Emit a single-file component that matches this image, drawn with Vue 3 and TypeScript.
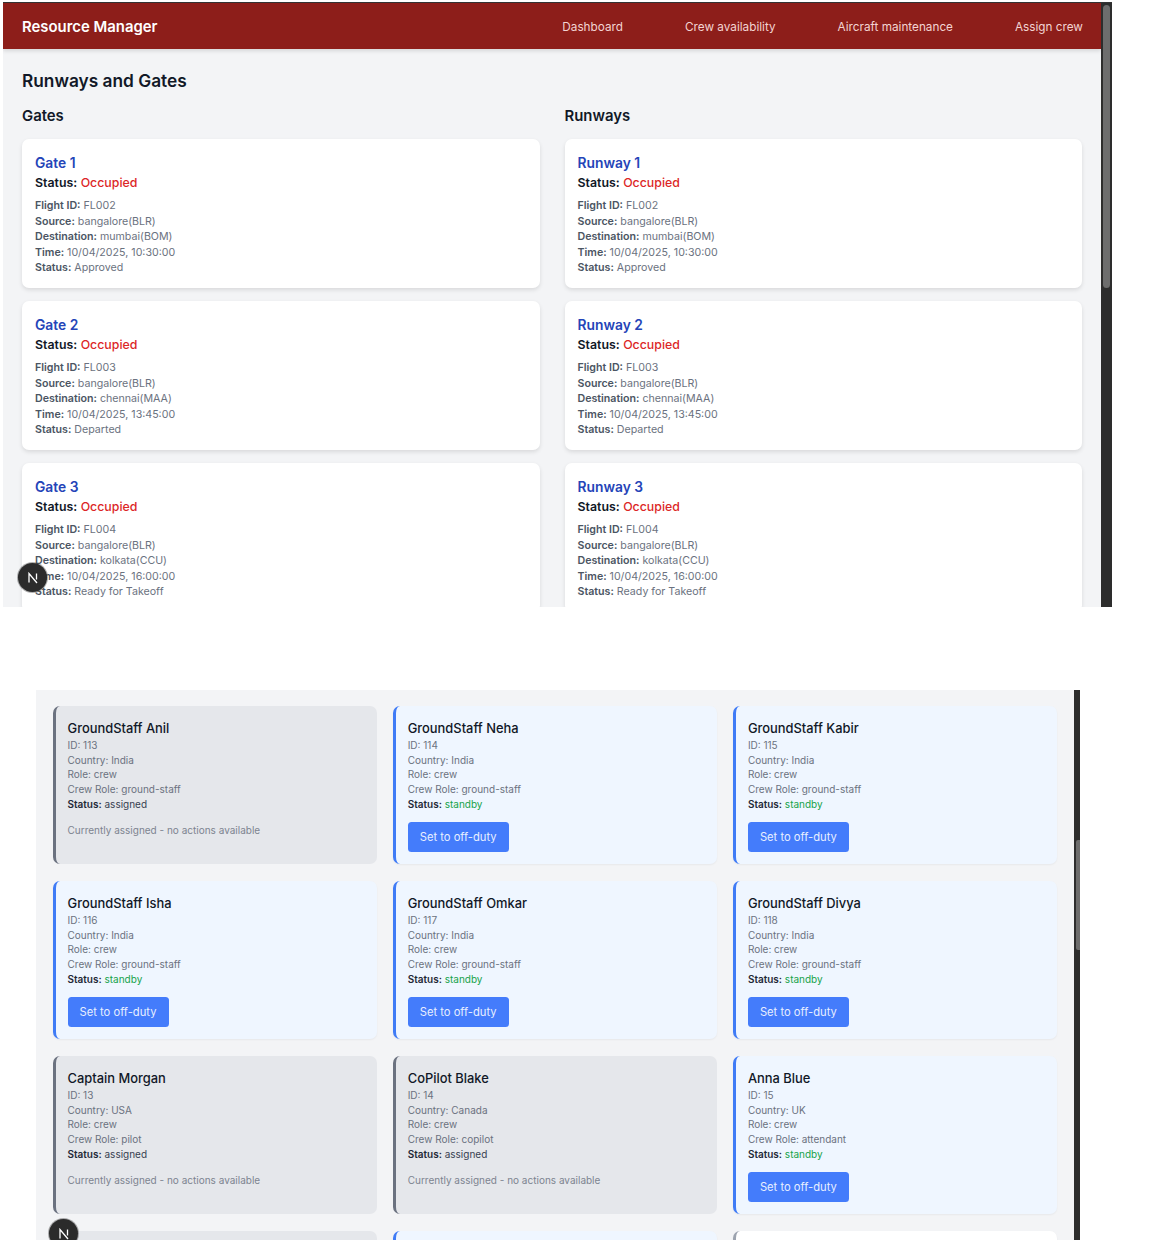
<script setup lang="ts">
interface Flight { id: string; dest: string; time: string; status: string }
const flights: Flight[] = [
  { id: 'FL002', dest: 'mumbai(BOM)', time: '10/04/2025, 10:30:00', status: 'Approved' },
  { id: 'FL003', dest: 'chennai(MAA)', time: '10/04/2025, 13:45:00', status: 'Departed' },
  { id: 'FL004', dest: 'kolkata(CCU)', time: '10/04/2025, 16:00:00', status: 'Ready for Takeoff' },
]
const columns = [
  { title: 'Gates', item: 'Gate' },
  { title: 'Runways', item: 'Runway' },
]
const nav = ['Dashboard', 'Crew availability', 'Aircraft maintenance', 'Assign crew']

interface Crew { name: string; id: number; country: string; crewRole: string; status: string }
const crew: Crew[] = [
  { name: 'GroundStaff Anil', id: 113, country: 'India', crewRole: 'ground-staff', status: 'assigned' },
  { name: 'GroundStaff Neha', id: 114, country: 'India', crewRole: 'ground-staff', status: 'standby' },
  { name: 'GroundStaff Kabir', id: 115, country: 'India', crewRole: 'ground-staff', status: 'standby' },
  { name: 'GroundStaff Isha', id: 116, country: 'India', crewRole: 'ground-staff', status: 'standby' },
  { name: 'GroundStaff Omkar', id: 117, country: 'India', crewRole: 'ground-staff', status: 'standby' },
  { name: 'GroundStaff Divya', id: 118, country: 'India', crewRole: 'ground-staff', status: 'standby' },
  { name: 'Captain Morgan', id: 13, country: 'USA', crewRole: 'pilot', status: 'assigned' },
  { name: 'CoPilot Blake', id: 14, country: 'Canada', crewRole: 'copilot', status: 'assigned' },
  { name: 'Anna Blue', id: 15, country: 'UK', crewRole: 'attendant', status: 'standby' },
]
</script>

<template>
  <div class="page">
    <section class="shot shot-top">
      <div class="app">
        <header class="bar">
          <span class="brand">Resource Manager</span>
          <nav class="nav">
            <a v-for="n in nav" :key="n">{{ n }}</a>
          </nav>
        </header>
        <main class="main">
          <h1>Runways and Gates</h1>
          <div class="cols">
            <div v-for="c in columns" :key="c.title" class="col">
              <h2>{{ c.title }}</h2>
              <article v-for="(f, i) in flights" :key="f.id" class="res">
                <h3>{{ c.item }} {{ i + 1 }}</h3>
                <p class="occ"><b>Status:</b> <span>Occupied</span></p>
                <div class="lines">
                  <p><b>Flight ID:</b> {{ f.id }}</p>
                  <p><b>Source:</b> bangalore(BLR)</p>
                  <p><b>Destination:</b> {{ f.dest }}</p>
                  <p><b>Time:</b> {{ f.time }}</p>
                  <p><b>Status:</b> {{ f.status }}</p>
                </div>
              </article>
            </div>
          </div>
        </main>
        <div class="badge badge-top">
          <svg width="12" height="12" viewBox="0 0 12 12" fill="none" stroke="#fff" stroke-width="1.3"><path d="M2 10.5V1.5L10 11" /><path d="M9.5 1.5V7.5" /></svg>
        </div>
      </div>
      <div class="track track-top"><div class="thumb thumb-top"></div></div>
    </section>

    <section class="shot shot-bottom">
      <div class="app app-b">
        <div class="grid">
          <article v-for="p in crew" :key="p.id" class="person" :class="p.status">
            <h3>{{ p.name }}</h3>
            <p>ID: {{ p.id }}</p>
            <p>Country: {{ p.country }}</p>
            <p>Role: crew</p>
            <p>Crew Role: {{ p.crewRole }}</p>
            <p class="st"><b>Status:</b> <span>{{ p.status }}</span></p>
            <button v-if="p.status === 'standby'" type="button">Set to off-duty</button>
            <p v-else class="none">Currently assigned - no actions available</p>
          </article>
          <article class="person assigned stub"></article>
          <article class="person standby stub"></article>
          <article class="person blank stub"></article>
        </div>
        <div class="badge badge-bottom">
          <svg width="12" height="12" viewBox="0 0 12 12" fill="none" stroke="#fff" stroke-width="1.3"><path d="M2 10.5V1.5L10 11" /><path d="M9.5 1.5V7.5" /></svg>
        </div>
      </div>
      <div class="track track-bottom"><div class="thumb thumb-bottom"></div></div>
    </section>
  </div>
</template>

<style>
html, body { margin: 0; background: #fff; }
</style>

<style scoped>
.page {
  width: 1166px;
  height: 1240px;
  overflow: hidden;
  background: #fff;
  font-family: Inter, "Liberation Sans", sans-serif;
  color: #111827;
}
p, h1, h2, h3 { margin: 0; }
.shot { display: flex; overflow: hidden; }
.shot-top {
  width: 1109px;
  height: 605px;
  margin: 2px 0 0 3px;
  border-top: 1px solid #333;
  box-sizing: border-box;
}
.shot-bottom {
  width: 1044px;
  height: 550px;
  margin: 83px 0 0 36px;
}
.app {
  position: relative;
  flex: 1;
  min-width: 0;
  background: #f3f4f6;
  overflow: hidden;
}
.bar {
  height: 46px;
  box-sizing: border-box;
  background: #8d1e1a;
  box-shadow: 0 2px 4px rgba(0, 0, 0, 0.12);
  display: flex;
  align-items: center;
  justify-content: space-between;
  padding: 0 18px 0 19px;
  color: #fff;
}
.brand { font-size: 14.9px; line-height: 20px; font-weight: 600; padding-top: 2px; }
.nav { display: flex; gap: 62px; font-size: 11.75px; line-height: 16px; color: #f3d4d2; padding-top: 2px; }
.main { padding: 20px 19px 0; }
h1 { font-size: 17.3px; line-height: 24px; font-weight: 600; color: #111827; }
.cols {
  display: grid;
  grid-template-columns: 517.5px 517.5px;
  gap: 25px;
  margin-top: 12px;
}
h2 { font-size: 14.9px; line-height: 22px; font-weight: 600; margin-bottom: 12px; }
.res {
  height: 149px;
  box-sizing: border-box;
  background: #fff;
  border-radius: 7px;
  padding: 13px;
  margin-bottom: 13px;
  box-shadow: 0 2px 4px rgba(0, 0, 0, 0.11);
}
.res h3 { font-size: 13.8px; line-height: 21px; font-weight: 600; color: #2444b8; padding-top: 1px; margin-bottom: -1px; }
.occ { font-size: 12.35px; line-height: 19px; margin-bottom: 6px; }
.occ b { font-weight: 600; }
.occ span { color: #dc2626; font-weight: 500; }
.lines p { font-size: 10.65px; line-height: 15.5px; color: #6b7280; }
.lines b { font-weight: 600; color: #4b5563; }
.track { background: #2d2d2d; flex: none; box-sizing: border-box; }
.track-top { width: 11px; padding: 2px 2px; }
.track-bottom { width: 6px; padding: 150px 0 0 2px; }
.thumb { background: #6d6d6d; border-radius: 4px; }
.thumb-top { height: 283px; }
.thumb-bottom { height: 110px; border-radius: 2px 0 0 2px; }
.badge {
  position: absolute;
  width: 29px;
  height: 29px;
  border-radius: 50%;
  background: #2b2b2b;
  display: flex;
  align-items: center;
  justify-content: center;
  box-shadow: 0 0 0 1px rgba(60, 60, 60, 0.4);
}
.badge-top { left: 15px; top: 560px; }
.badge-bottom { left: 13px; top: 529px; }
.grid {
  display: grid;
  grid-template-columns: repeat(3, 323.5px);
  grid-auto-rows: 158px;
  gap: 17px 16.7px;
  padding: 16px 17px;
}
.person {
  box-sizing: border-box;
  border-radius: 7px;
  border-left: 3.5px solid #6b7280;
  padding: 15px 11px 14px 11.5px;
  box-shadow: 0 1px 2px rgba(0, 0, 0, 0.05);
}
.person.assigned { background: #e5e7eb; border-left-color: #6b7280; box-shadow: none; }
.person.standby { background: #eff6ff; border-left-color: #3f7bf6; }
.person.blank { background: #fff; border-left-color: #9ca3af; }
.person h3 { font-size: 12.9px; line-height: 16px; font-weight: 500; color: #111827; margin-bottom: 1px; }
.person p { font-size: 10px; line-height: 14.7px; color: #6b7280; }
.person .st { color: #374151; }
.st b { font-weight: 600; color: #1f2937; }
.standby .st span { color: #16a34a; }
.person .none { color: #7d8490; margin-top: 11px; }
button {
  display: block;
  margin-top: 10px;
  width: 101px;
  height: 30px;
  border: none;
  border-radius: 3.5px;
  background: #447cfb;
  color: #e8efff;
  font: 400 11.2px Inter, "Liberation Sans", sans-serif;
  padding: 0;
}
</style>
